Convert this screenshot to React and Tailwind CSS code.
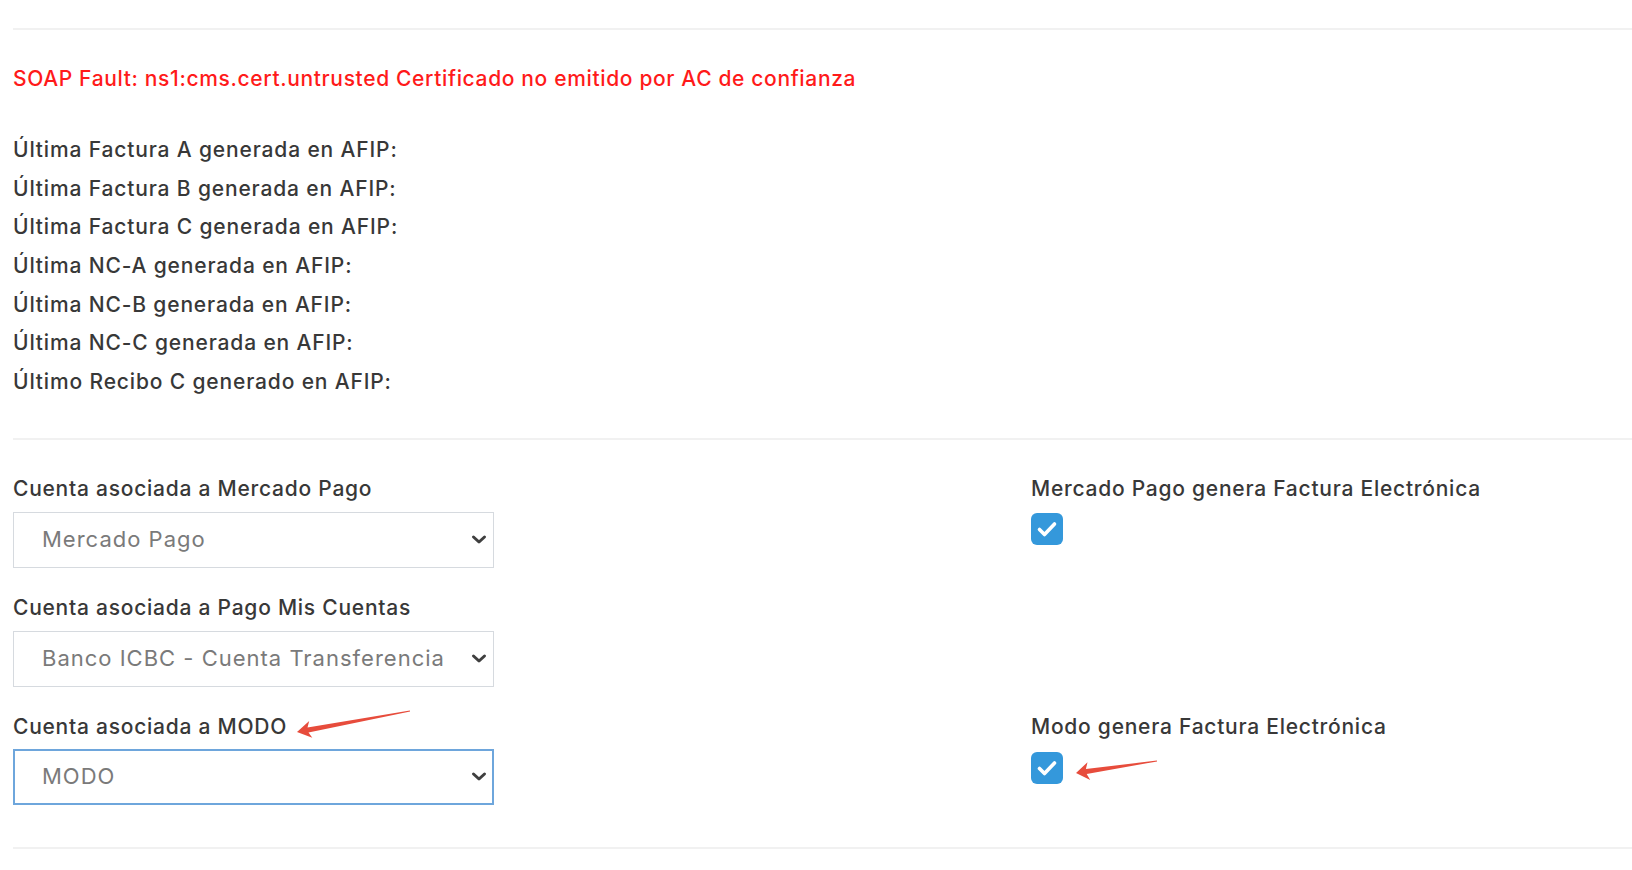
import React from "react";

function arrowPoints(tip, tail, headLen, headHalf, shaftHalf, tailHalf) {
  const dx = tail[0] - tip[0];
  const dy = tail[1] - tip[1];
  const len = Math.hypot(dx, dy);
  const ux = dx / len, uy = dy / len;
  const nx = -uy, ny = ux;
  const base = [tip[0] + ux * headLen, tip[1] + uy * headLen];
  const notch = [tip[0] + ux * (headLen * 0.8), tip[1] + uy * (headLen * 0.8)];
  const pts = [
    tip,
    [base[0] + nx * headHalf, base[1] + ny * headHalf],
    [notch[0] + nx * shaftHalf, notch[1] + ny * shaftHalf],
    [tail[0] + nx * tailHalf, tail[1] + ny * tailHalf],
    [tail[0] - nx * tailHalf, tail[1] - ny * tailHalf],
    [notch[0] - nx * shaftHalf, notch[1] - ny * shaftHalf],
    [base[0] - nx * headHalf, base[1] - ny * headHalf],
  ];
  return pts.map((p) => p[0].toFixed(1) + "," + p[1].toFixed(1)).join(" ");
}

function Chevron() {
  return (
    <svg width="16" height="11" viewBox="0 0 16 11" className="shrink-0">
      <path d="M2.5 3 L8 8 L13.5 3" fill="none" stroke="#3f3f3f" strokeWidth="3" strokeLinecap="round" strokeLinejoin="round" />
    </svg>
  );
}

function FakeSelect({ value, focused }) {
  return (
    <div
      className={
        focused
          ? "w-[481px] h-[56px] flex items-center justify-between pl-[27px] pr-[5px] bg-white border-2 border-[#6ea6dc]"
          : "w-[481px] h-[56px] flex items-center justify-between pl-[28px] pr-[6px] bg-white border border-[#d6dadf]"
      }
    >
      <span className="text-[22px] text-[#7a7a7a] tracking-[1px] font-normal whitespace-nowrap">{value}</span>
      <Chevron />
    </div>
  );
}

function Checkbox() {
  return (
    <div className="w-[32px] h-[32px] rounded-[6px] bg-[#3498db] flex items-center justify-center">
      <svg width="32" height="32" viewBox="0 0 32 32">
        <path d="M8.5 16.5 L13.5 21.5 L23.5 11" fill="none" stroke="#fff" strokeWidth="3.6" strokeLinecap="round" strokeLinejoin="round" />
      </svg>
    </div>
  );
}

function Label({ children }) {
  return <div className="h-[30px] leading-[30px] text-[21px] text-[#383838] font-medium tracking-[0.75px] whitespace-nowrap">{children}</div>;
}

export default function App() {
  const rows = [
    "Última Factura A generada en AFIP:",
    "Última Factura B generada en AFIP:",
    "Última Factura C generada en AFIP:",
    "Última NC-A generada en AFIP:",
    "Última NC-B generada en AFIP:",
    "Última NC-C generada en AFIP:",
    "Último Recibo C generado en AFIP:",
  ];
  return (
    <div
      className="relative w-[1632px] h-[870px] bg-white overflow-hidden"
      style={{ fontFamily: "Inter, 'Noto Sans', sans-serif" }}
    >
      <div className="pl-[13px] pt-[28px]">
        <div className="border-t-2 border-[#f1f1f1]" />
        <p className="mt-[30px] leading-[38px] text-[21px] text-[#ff1a1a] font-medium tracking-[0.65px] whitespace-nowrap">
          SOAP Fault: ns1:cms.cert.untrusted Certificado no emitido por AC de confianza
        </p>
        <div className="mt-[33px]">
          {rows.map((r) => (
            <div key={r} className="h-[38.66px] leading-[38.66px] text-[21px] text-[#383838] font-medium tracking-[0.85px] whitespace-nowrap">
              {r}
            </div>
          ))}
        </div>
        <div className="mt-[36px] border-t-2 border-[#f1f1f1]" />

        <div className="pt-[34px] flex flex-col gap-[25px]">
          <div className="flex">
            <div className="w-[1018px] shrink-0">
              <Label>Cuenta asociada a Mercado Pago</Label>
              <div className="mt-[8px]">
                <FakeSelect value="Mercado Pago" />
              </div>
            </div>
            <div>
              <Label>Mercado Pago genera Factura Electrónica</Label>
              <div className="mt-[9px]">
                <Checkbox />
              </div>
            </div>
          </div>

          <div className="flex">
            <div className="w-[1018px] shrink-0">
              <Label>Cuenta asociada a Pago Mis Cuentas</Label>
              <div className="mt-[8px]">
                <FakeSelect value="Banco ICBC - Cuenta Transferencia" />
              </div>
            </div>
          </div>

          <div className="flex">
            <div className="w-[1018px] shrink-0">
              <Label>Cuenta asociada a MODO</Label>
              <div className="mt-[7px]">
                <FakeSelect value="MODO" focused />
              </div>
            </div>
            <div>
              <Label>Modo genera Factura Electrónica</Label>
              <div className="mt-[10px]">
                <Checkbox />
              </div>
            </div>
          </div>
        </div>

        <div className="mt-[42px] border-t-2 border-[#f1f1f1]" />
      </div>

      <svg className="absolute inset-0 pointer-events-none" width="1632" height="870">
        <polygon points={arrowPoints([297, 732], [410, 711], 14, 8.5, 2.6, 0.4)} fill="#e74c3c" />
        <polygon points={arrowPoints([1076, 773], [1157, 761], 13, 9, 2.6, 0.4)} fill="#e74c3c" />
      </svg>
    </div>
  );
}
